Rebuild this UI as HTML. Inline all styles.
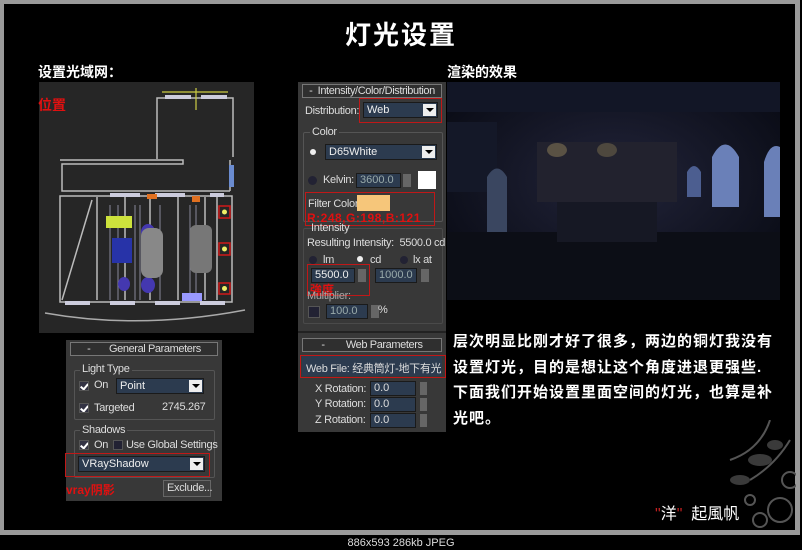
<!DOCTYPE html>
<html><head><meta charset="utf-8"><style>
*{margin:0;padding:0;box-sizing:border-box}
body{width:802px;height:550px;background:#000;position:relative;overflow:hidden;font-family:"Liberation Sans","Noto Sans CJK SC",sans-serif;color:#fff}
.a{position:absolute}
.cn{font-family:"Liberation Sans","Noto Sans CJK SC",sans-serif;font-weight:bold}
.ui{font-family:"Liberation Sans",sans-serif;font-size:11px;color:#ddd;letter-spacing:-0.3px;white-space:nowrap}
.hdr{border:1px solid #777;background:#2f2f2f;color:#ddd;font-size:11px;letter-spacing:-0.4px;text-align:center;height:14px;line-height:12px;white-space:nowrap;overflow:hidden}
.dd{background:#2c3b4f;color:#eee;border:1px solid #1a1a1a;height:16px;line-height:14px;padding-left:3px;font-size:11px}
.arr{position:absolute;right:1px;top:1px;width:13px;height:12px;background:#eee}
.arr:after{content:"";position:absolute;left:3px;top:4px;border-left:4px solid transparent;border-right:4px solid transparent;border-top:4px solid #000}
.sp{background:#2c3b4f;color:#9aa;border:1px solid #1a1a1a;height:15px;line-height:13px;padding-left:3px;font-size:11px}
.grp{border:1px solid #555;border-radius:2px}
.red{color:#e01010;font-weight:bold}
.rb{border:1px solid #c01818}
.chk{width:10px;height:10px;background:#223;border:1px solid #555;display:inline-block;overflow:hidden}
.chk.on{background:#334}
.chk.on:after{content:"";position:absolute;left:2px;top:0px;width:3px;height:6px;border-right:2px solid #fff;border-bottom:2px solid #fff;transform:rotate(40deg)}
</style></head><body>
<div class="a" style="left:0;top:0;width:800px;height:535px;border:4px solid #9a9a9a;border-right-width:5px;border-bottom-width:5px"></div>
<div class="a" style="left:0;width:802px;text-align:center;font-size:11px;color:#ddd;top:537px">886x593 286kb JPEG</div>

<div class="a cn" style="left:0;width:802px;text-align:center;top:15px;font-size:26px;letter-spacing:2px">灯光设置</div>
<div class="a cn" style="left:38px;top:62px;font-size:14px">设置光域网：</div>
<div class="a cn" style="left:447px;top:62px;font-size:14px">渲染的效果</div>

<div class="a" style="left:39px;top:82px;width:215px;height:251px;background:#262626"></div>
<svg class="a" style="left:39px;top:82px" width="215" height="251" viewBox="39 82 215 251">
<g fill="none" stroke="#bbb" stroke-width="1.5">
<path d="M157 159 V98 H233 V157"/><path d="M60 160 H183 V164 H62 V191 H230"/><path d="M230 160 V191"/>
<rect x="60" y="196" width="172" height="106"/>
<path d="M97 197 V300 M125 197 V300 M150 197 V300 M178 197 V300 M205 197 V300 M217 197 V300"/>
<path d="M92 200 L62 300"/>
</g>
<g stroke="#889" stroke-width="1"><path d="M110 205 V300 M118 205 V300 M135 205 V300 M140 205 V300 M160 205 V300 M190 205 V300 M196 205 V300"/></g>
<path d="M45 313 Q140 330 245 310" fill="none" stroke="#aaa" stroke-width="1.5"/>
<g fill="#ccd"><rect x="165" y="95" width="26" height="4"/><rect x="201" y="95" width="26" height="4"/><rect x="110" y="193" width="30" height="4"/><rect x="155" y="193" width="30" height="4"/><rect x="210" y="193" width="14" height="4"/>
<rect x="65" y="301" width="25" height="4"/><rect x="110" y="301" width="25" height="4"/><rect x="155" y="301" width="25" height="4"/><rect x="200" y="301" width="25" height="4"/></g>
<path d="M162 92 H228 M196 88 V110" stroke="#cc4" stroke-width="1.2"/>
<rect x="106" y="216" width="26" height="12" fill="#cde23c"/>
<rect x="112" y="238" width="20" height="25" fill="#2733a8"/>
<ellipse cx="148" cy="232" rx="7" ry="8" fill="#4438b0"/><ellipse cx="148" cy="285" rx="7" ry="8" fill="#4438b0"/><ellipse cx="124" cy="284" rx="6" ry="7" fill="#4438b0"/>
<rect x="141" y="228" width="22" height="50" rx="8" fill="#888"/>
<rect x="190" y="225" width="22" height="48" rx="6" fill="#777"/>
<rect x="182" y="293" width="20" height="8" fill="#99f"/>
<rect x="147" y="194" width="10" height="5" fill="#e07020"/><rect x="192" y="196" width="8" height="6" fill="#e07020"/>
<g fill="none" stroke="#d01818" stroke-width="1.5"><rect x="219" y="206" width="11" height="12"/><rect x="219" y="243" width="11" height="12"/><rect x="219" y="283" width="11" height="11"/></g>
<g fill="#ee6"><circle cx="224.5" cy="212" r="2.5"/><circle cx="224.5" cy="249" r="2.5"/><circle cx="224.5" cy="288.5" r="2.5"/></g>
<rect x="229" y="165" width="5" height="22" fill="#6b8cd0"/>
</svg>
<div class="a red" style="left:38px;top:95px;font-size:14px">位置</div>

<div class="a" style="left:298px;top:82px;width:148px;height:350px;background:#383838"></div>
<div class="a hdr" style="left:302px;top:84px;width:140px">-&nbsp; Intensity/Color/Distribution</div>
<div class="a ui" style="left:305px;top:105px">Distribution:</div>
<div class="a dd" style="left:363px;top:102px;width:75px">Web<span class="arr"></span></div>
<div class="a rb" style="left:359px;top:98px;width:83px;height:25px"></div>
<div class="a grp" style="left:303px;top:132px;width:140px;height:90px"></div>
<div class="a ui" style="left:310px;top:126px;background:#383838;padding:0 2px">Color</div>
<div class="a" style="left:310px;top:149px;width:6px;height:6px;border-radius:50%;background:#eee"></div>
<div class="a dd" style="left:325px;top:144px;width:112px">D65White<span class="arr"></span></div>
<div class="a" style="left:308px;top:176px;width:9px;height:9px;border-radius:50%;background:#223"></div>
<div class="a ui" style="left:323px;top:174px">Kelvin:</div>
<div class="a sp" style="left:356px;top:173px;width:45px">3600.0</div>
<div class="a" style="left:403px;top:174px;width:8px;height:13px;background:#666"></div>
<div class="a" style="left:418px;top:171px;width:18px;height:18px;background:#fff"></div>
<div class="a rb" style="left:305px;top:192px;width:130px;height:34px"></div>
<div class="a ui" style="left:308px;top:198px">Filter Color:</div>
<div class="a" style="left:357px;top:195px;width:33px;height:16px;background:#f6c67a"></div>
<div class="a red" style="left:307px;top:211px;font-size:12px;letter-spacing:0.5px">R:248,G:198,B:121</div>
<div class="a grp" style="left:303px;top:228px;width:140px;height:96px;border-color:#4a4a4a"></div>
<div class="a ui" style="left:311px;top:222px">Intensity</div>
<div class="a ui" style="left:307px;top:237px">Resulting Intensity: &nbsp;5500.0 cd</div>
<div class="a" style="left:309px;top:256px;width:8px;height:8px;border-radius:50%;background:#223"></div><div class="a ui" style="left:323px;top:254px">lm</div>
<div class="a" style="left:357px;top:256px;width:6px;height:6px;border-radius:50%;background:#eee"></div><div class="a ui" style="left:370px;top:254px">cd</div>
<div class="a" style="left:400px;top:256px;width:8px;height:8px;border-radius:50%;background:#223"></div><div class="a ui" style="left:413px;top:254px">lx at</div>
<div class="a sp" style="left:311px;top:268px;width:44px;color:#eee">5500.0</div>
<div class="a" style="left:358px;top:269px;width:8px;height:13px;background:#666"></div>
<div class="a sp" style="left:375px;top:268px;width:42px">1000.0</div>
<div class="a" style="left:421px;top:269px;width:8px;height:13px;background:#666"></div>
<div class="a rb" style="left:307px;top:264px;width:63px;height:32px"></div>
<div class="a red" style="left:310px;top:281px;font-size:12px">強度</div>
<div class="a ui" style="left:307px;top:290px;color:#aaa">Multiplier:</div>
<div class="a chk" style="left:308px;top:306px;width:12px;height:12px"></div>
<div class="a sp" style="left:326px;top:304px;width:42px">100.0</div>
<div class="a" style="left:371px;top:305px;width:8px;height:13px;background:#666"></div>
<div class="a ui" style="left:378px;top:304px">%</div>
<div class="a" style="left:298px;top:331px;width:148px;height:2px;background:#222"></div>
<div class="a hdr" style="left:302px;top:338px;width:140px">-&nbsp;&nbsp;&nbsp;&nbsp;&nbsp;&nbsp;&nbsp; Web Parameters</div>
<div class="a" style="left:302px;top:356px;width:140px;height:20px;background:#2c3b4f"></div>
<div class="a rb" style="left:300px;top:355px;width:146px;height:23px"></div>
<div class="a ui" style="left:306px;top:360px;overflow:hidden;width:135px;font-family:'Liberation Sans','Noto Sans CJK SC',sans-serif">Web File: 经典筒灯-地下有光线</div>
<div class="a ui" style="left:315px;top:383px">X Rotation:</div><div class="a sp" style="left:370px;top:381px;width:46px;color:#ddd">0.0</div><div class="a" style="left:420px;top:382px;width:7px;height:13px;background:#666"></div>
<div class="a ui" style="left:315px;top:398px">Y Rotation:</div><div class="a sp" style="left:370px;top:397px;width:46px;color:#ddd">0.0</div><div class="a" style="left:420px;top:398px;width:7px;height:13px;background:#666"></div>
<div class="a ui" style="left:315px;top:414px">Z Rotation:</div><div class="a sp" style="left:370px;top:413px;width:46px;color:#ddd">0.0</div><div class="a" style="left:420px;top:414px;width:7px;height:13px;background:#666"></div>

<svg class="a" style="left:447px;top:82px" width="333" height="218" viewBox="0 0 333 218">
<defs><radialGradient id="g" cx="0.5" cy="0.45" r="0.6"><stop offset="0" stop-color="#22243a"/><stop offset="1" stop-color="#0a0c16"/></radialGradient></defs>
<rect width="333" height="218" fill="url(#g)"/>
<rect x="0" y="0" width="333" height="30" fill="#121626"/>
<rect x="0" y="40" width="50" height="70" fill="#141828"/>
<path d="M40 150 V95 Q50 78 60 95 V150Z" fill="#3a4660"/>
<rect x="90" y="60" width="140" height="60" fill="#22222e"/>
<ellipse cx="110" cy="68" rx="10" ry="7" fill="#5a5244"/><ellipse cx="160" cy="68" rx="10" ry="7" fill="#4e483e"/>
<path d="M240 115 V90 Q247 78 254 90 V115Z" fill="#4c5e90"/>
<path d="M265 125 V75 Q278 50 292 75 V125Z" fill="#6a80b8"/>
<path d="M317 135 V80 Q323 60 333 65 V135Z" fill="#6a80b8"/>
<rect x="0" y="150" width="333" height="68" fill="#0c0e16"/>
<rect x="110" y="120" width="100" height="40" fill="#161824"/>
</svg>

<div class="a" style="left:66px;top:340px;width:156px;height:161px;background:#383838"></div>
<div class="a hdr" style="left:70px;top:342px;width:148px">-&nbsp;&nbsp;&nbsp;&nbsp;&nbsp;&nbsp; General Parameters</div>
<div class="a grp" style="left:74px;top:370px;width:141px;height:50px"></div>
<div class="a ui" style="left:80px;top:363px;background:#383838;padding:0 2px">Light Type</div>
<div class="a chk on" style="left:79px;top:381px"></div><div class="a ui" style="left:94px;top:379px">On</div>
<div class="a dd" style="left:116px;top:378px;width:88px">Point<span class="arr"></span></div>
<div class="a chk on" style="left:79px;top:403px"></div><div class="a ui" style="left:94px;top:402px">Targeted</div>
<div class="a ui" style="left:162px;top:401px">2745.267</div>
<div class="a grp" style="left:74px;top:430px;width:141px;height:48px"></div>
<div class="a ui" style="left:80px;top:424px;background:#383838;padding:0 2px">Shadows</div>
<div class="a chk on" style="left:79px;top:440px"></div><div class="a ui" style="left:94px;top:439px">On</div>
<div class="a chk" style="left:113px;top:440px"></div><div class="a ui" style="left:126px;top:439px">Use Global Settings</div>
<div class="a dd" style="left:78px;top:456px;width:127px">VRayShadow<span class="arr"></span></div>
<div class="a rb" style="left:65px;top:453px;width:145px;height:24px"></div>
<div class="a red" style="left:66px;top:481px;font-size:12px">vray阴影</div>
<div class="a" style="left:163px;top:480px;width:48px;height:17px;border:1px solid #666;background:#3e3e3e"></div>
<div class="a ui" style="left:167px;top:482px">Exclude...</div>

<div class="a cn" style="left:453px;top:329px;width:345px;font-size:15px;line-height:25.5px;letter-spacing:1px;white-space:nowrap">层次明显比刚才好了很多，两边的铜灯我没有<br>设置灯光，目的是想让这个角度进退更强些.<br>下面我们开始设置里面空间的灯光，也算是补<br>光吧。</div>

<svg class="a" style="left:720px;top:420px" width="76" height="111"><g fill="none" stroke="#555" stroke-width="2">
<circle cx="60" cy="90" r="12"/><circle cx="40" cy="100" r="7"/><circle cx="70" cy="60" r="8"/><circle cx="30" cy="80" r="5"/>
<path d="M10 40 Q40 30 50 0 M30 60 Q55 45 70 20"/></g><g fill="#3a3a3a"><ellipse cx="40" cy="40" rx="12" ry="6"/><ellipse cx="55" cy="25" rx="8" ry="5"/><ellipse cx="20" cy="60" rx="10" ry="5"/></g></svg>
<div class="a cn" style="left:655px;top:500px;font-size:16px;font-weight:normal"><span style="color:#c02020">"</span>洋<span style="color:#c02020">"</span>&nbsp; 起風帆</div>
</body></html>
